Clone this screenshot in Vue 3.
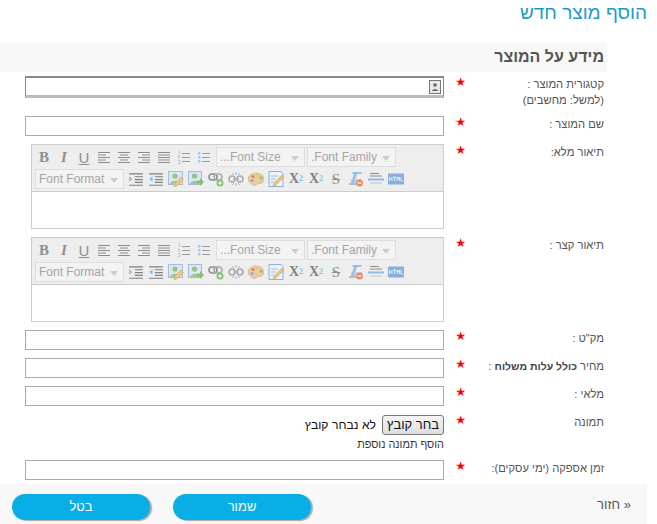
<script setup>
const row1 = ['align-l', 'align-c', 'align-r', 'align-j', 'ol', 'ul']
const row2 = ['indent', 'outdent', 'imgedit', 'imgins', 'link', 'unlink', 'palette', 'docedit']
const row3 = ['clear', 'hr', 'html']
const editors = ['תיאור מלא:', 'תיאור קצר :']
</script>

<template>
  <div class="page" dir="rtl">
    <svg class="defs" width="0" height="0" aria-hidden="true">
      <symbol id="align-l" viewBox="0 0 14 14"><path d="M1 2.500h12M1 5h8M1 7.500h12M1 10h8M1 12.500h12" stroke="#777" fill="none"/></symbol>
      <symbol id="align-c" viewBox="0 0 14 14"><path d="M1 2.500h12M3 5h8M1 7.500h12M3 10h8M1 12.500h12" stroke="#777" fill="none"/></symbol>
      <symbol id="align-r" viewBox="0 0 14 14"><path d="M1 2.500h12M5 5h8M1 7.500h12M5 10h8M1 12.500h12" stroke="#777" fill="none"/></symbol>
      <symbol id="align-j" viewBox="0 0 14 14"><path d="M1 2.500h12M1 5h12M1 7.500h12M1 10h12M1 12.500h12" stroke="#777" fill="none"/></symbol>
      <symbol id="ol" viewBox="0 0 14 14"><path d="M5 3.500h8M5 7.500h8M5 11.500h8" stroke="#888" fill="none"/><path d="M1.500 1h1v3M1 6h2l-2 2h2M1 10.500h2v3H1" stroke="#8fbde8" fill="none" stroke-width=".9"/></symbol>
      <symbol id="ul" viewBox="0 0 14 14"><path d="M5 3.500h8M5 7.500h8M5 11.500h8" stroke="#888" fill="none"/><rect x="1" y="2" width="2.400" height="2.400" fill="#8fbde8"/><rect x="1" y="6" width="2.400" height="2.400" fill="#8fbde8"/><rect x="1" y="10" width="2.400" height="2.400" fill="#8fbde8"/></symbol>
      <symbol id="indent" viewBox="0 0 14 14"><path d="M1 2.500h12M6 5h7M6 7.500h7M6 10h7M1 12.500h12" stroke="#666" fill="none"/><path d="M1 4.500l3 2.500-3 2.500z" fill="#6fb2ea"/></symbol>
      <symbol id="outdent" viewBox="0 0 14 14"><path d="M1 2.500h12M6 5h7M6 7.500h7M6 10h7M1 12.500h12" stroke="#666" fill="none"/><path d="M4 4.500L1 7l3 2.500z" fill="#6fb2ea"/></symbol>
      <symbol id="imgedit" viewBox="0 0 16 16"><rect x=".5" y=".5" width="14" height="13" fill="#d6e6f5" stroke="#8fb2d8"/><circle cx="7" cy="5" r="2.600" fill="#84b56f"/><path d="M2 13c1-4 8-4 9-1v1H2z" fill="#8cbf70"/><path d="M6 15.500l1-3.500 6-6 2.500 2.500-6 6z" fill="#ecc26c" stroke="#b98a3c" stroke-width=".6"/></symbol>
      <symbol id="imgins" viewBox="0 0 16 16"><rect x=".5" y=".5" width="13" height="13" fill="#d6e6f5" stroke="#8fb2d8"/><circle cx="6.500" cy="5" r="2.600" fill="#84b56f"/><path d="M2 13c1-4 8-4 9-1v1H2z" fill="#8cbf70"/><path d="M9 9.500h3V7l4 4-4 4v-2.500H9z" fill="#6ab556"/></symbol>
      <symbol id="link" viewBox="0 0 16 16"><rect x="1" y="3" width="8" height="6" rx="3" fill="none" stroke="#777" stroke-width="1.600"/><rect x="6" y="3" width="8" height="6" rx="3" fill="none" stroke="#999" stroke-width="1.600"/><circle cx="12" cy="12" r="3.500" fill="#6cb85a"/><path d="M12 10v4M10 12h4" stroke="#fff"/></symbol>
      <symbol id="unlink" viewBox="0 0 16 16"><rect x="1" y="5" width="6" height="6" rx="3" fill="none" stroke="#999" stroke-width="1.500"/><rect x="9" y="5" width="6" height="6" rx="3" fill="none" stroke="#999" stroke-width="1.500"/><path d="M5 8h6" stroke="#999"/><path d="M8 1v3M8 12v3M4 2l2 2M12 2l-2 2M4 14l2-2M12 14l-2-2" stroke="#7db2e6"/></symbol>
      <symbol id="palette" viewBox="0 0 16 16"><path d="M8 2c4.500 0 8 2.500 8 6s-3 5-5 4.500-3 2.500-5 2S0 11 0 8s3.500-6 8-6z" fill="#eac48e" stroke="#c49a5e" stroke-width=".6"/><circle cx="5" cy="5.500" r="1.500" fill="#d95d4a"/><circle cx="9" cy="4.500" r="1.500" fill="#e8c040"/><circle cx="13" cy="7" r="1.500" fill="#6cb85a"/><circle cx="4" cy="9.500" r="1.500" fill="#6a9fe0"/></symbol>
      <symbol id="docedit" viewBox="0 0 16 16"><path d="M1 .5h12l2 2v13H1z" fill="#eef5fc" stroke="#6fa3d6"/><path d="M3 5h7M3 8h5M3 11h3" stroke="#8ab4dc"/><path d="M5 15l1-3 8-8 2 2-8 8z" fill="#e8c060" stroke="#b98a3c" stroke-width=".6"/></symbol>
      <symbol id="clear" viewBox="0 0 16 16"><path d="M5 1h9l-1 2H9l-3 9h2v2H1v-2h2l3-9H4z" fill="#85b5e5"/><path d="M3 9h11M3 11h11" stroke="#85b5e5"/><circle cx="11.500" cy="12" r="3.500" fill="#e8734a"/><path d="M9.500 12h4" stroke="#fff" stroke-width="1.200"/></symbol>
      <symbol id="hr" viewBox="0 0 16 16"><path d="M2 2.500h9M2 5h12" stroke="#777" fill="none"/><path d="M0 8.500h16" stroke="#7db2e6" stroke-width="2"/><path d="M2 12h12" stroke="#bbb"/></symbol>
      <symbol id="html" viewBox="0 0 16 14"><rect width="16" height="11" y="1.500" fill="#6f9fdc"/><path d="M1.500 5v4M4 5v4M1.500 7H4M5 5h3M6.500 5v4M9 9V5l1.200 2L11.500 5v4M13 5v4h2.500" stroke="#fff" stroke-width=".8" fill="none"/></symbol>
    </svg>

    <h1 class="title">הוסף מוצר חדש</h1>

    <div class="section">
      <h2 class="section-head">מידע על המוצר</h2>

      <div class="row row-cat">
        <label class="lbl">קטגורית המוצר :<br>(למשל: מחשבים)</label>
        <span class="star">★</span>
        <div class="cat-box">
          <svg class="cat-ic" width="12" height="14" viewBox="0 0 12 14"><rect x=".5" y=".5" width="11" height="13" fill="#e8e8e8" stroke="#777"/><circle cx="6" cy="5" r="1.800" fill="#666"/><path d="M3 11c0-2.500 6-2.500 6 0z" fill="#666"/></svg>
        </div>
      </div>

      <div class="row">
        <label class="lbl">שם המוצר :</label>
        <span class="star">★</span>
        <div class="box"></div>
      </div>

      <div v-for="ed in editors" :key="ed" class="row">
        <label class="lbl">{{ ed }}</label>
        <span class="star">★</span>
        <div class="editor-wrap">
          <div class="editor" dir="ltr">
            <div class="toolbar">
              <div class="tline">
                <span class="tb txt b">B</span>
                <span class="tb txt i">I</span>
                <span class="tb txt u">U</span>
                <span v-for="k in row1" :key="k" class="tb"><svg width="14" height="14"><use :href="'#' + k" /></svg></span>
                <span class="sel sel-size">...Font Size<i class="caret"></i></span>
                <span class="sel">.Font Family<i class="caret"></i></span>
              </div>
              <div class="tline line2">
                <span class="sel sel-format">Font Format<i class="caret"></i></span>
                <span class="icons">
                  <span v-for="k in row2" :key="k" class="tb"><svg width="16" height="16"><use :href="'#' + k" /></svg></span>
                  <span class="tb txt b x">X<sub>2</sub></span>
                  <span class="tb txt b x">X<sup>2</sup></span>
                  <span class="tb txt b s">S</span>
                  <span v-for="k in row3" :key="k" class="tb"><svg width="16" height="16"><use :href="'#' + k" /></svg></span>
                </span>
              </div>
            </div>
            <div class="edit-area"></div>
          </div>
        </div>
      </div>

      <div class="row">
        <label class="lbl">מק"ט :</label>
        <span class="star">★</span>
        <div class="box"></div>
      </div>
      <div class="row">
        <label class="lbl">מחיר <b>כולל עלות משלוח</b> :</label>
        <span class="star">★</span>
        <div class="box"></div>
      </div>
      <div class="row">
        <label class="lbl">מלאי :</label>
        <span class="star">★</span>
        <div class="box"></div>
      </div>
      <div class="row row-img">
        <label class="lbl">תמונה</label>
        <span class="star">★</span>
        <div class="img-field">
          <div class="file-line">
            <span class="file-btn">בחר קובץ</span>
            <span class="file-none">לא נבחר קובץ</span>
          </div>
          <div class="more">הוסף תמונה נוספת</div>
        </div>
      </div>
      <div class="row">
        <label class="lbl">זמן אספקה (ימי עסקים):</label>
        <span class="star">★</span>
        <div class="box"></div>
      </div>
    </div>

    <div class="footer">
      <span class="back">« חזור</span>
      <span class="btns">
        <span class="btn">שמור</span>
        <span class="btn">בטל</span>
      </span>
    </div>
  </div>
</template>

<style>
html, body { margin: 0; background: #fff; }
</style>

<style scoped>
.page {
  width: 657px;
  height: 524px;
  overflow: hidden;
  position: relative;
  font-family: "Liberation Sans", Arial, sans-serif;
  font-size: 11.200px;
  color: #555;
  background: #fff;
}
.defs { position: absolute; }
.title {
  margin: 0;
  padding: 1px 10px 0 0;
  height: 41px;
  font-size: 19px;
  line-height: 24px;
  font-weight: normal;
  color: #1c9bc8;
}
.section { width: 607px; margin-right: 50px; }
.section-head {
  margin: 0 0 4px;
  height: 30px;
  padding-right: 3px;
  background: #f8f8f8;
  font-size: 16px;
  line-height: 30px;
  color: #555;
}
.row {
  display: grid;
  grid-template-columns: 138px 22px 419px;
  margin: 0 3px 8px 0;
}
.row-cat { height: 32px; }
.lbl { line-height: 16px; }
.lbl b { color: #444; font-size: 10.500px; }
.star { color: #f00; font-size: 12px; line-height: 12px; font-family: "DejaVu Sans", sans-serif; }
.box {
  height: 18px;
  border: 1px solid #aaa;
  background: #fff;
}
.cat-box {
  height: 17px;
  border: 1px solid #888;
  border-top-width: 2px;
  border-bottom: 3px solid #bbb;
  background: #fff;
  display: flex;
  align-items: center;
  padding-right: 2px;
}
.cat-ic { display: block; }
.editor-wrap { display: flex; }
.editor {
  width: 411px;
  height: 83px;
  border: 1px solid #ccc;
  background: #fff;
  display: flex;
  flex-direction: column;
}
.toolbar {
  height: 47px;
  box-sizing: border-box;
  background: #eee;
  border-bottom: 1px solid #ccc;
  padding: 2px 0 0 2px;
}
.tline { display: flex; align-items: center; height: 20px; }
.line2 { margin-top: 2px; }
.tb {
  width: 20px;
  height: 20px;
  display: flex;
  align-items: center;
  justify-content: center;
  flex: none;
  opacity: .8;
}
.txt { font-family: "Liberation Serif", serif; color: #777; font-size: 15px; }
.b { font-weight: bold; }
.i { font-style: italic; font-weight: bold; }
.u { text-decoration: underline; font-family: "Liberation Sans", sans-serif; font-weight: normal; }
.s { text-decoration: line-through; font-weight: normal; }
.x { font-size: 14px; color: #666; }
.x sub, .x sup { font-size: 8px; color: #7ab0e0; line-height: 0; }
.icons { display: flex; margin-left: 2px; }
.sel {
  width: 89px;
  height: 20px;
  box-sizing: border-box;
  border: 1px solid #ddd;
  background: #f3f3f3;
  color: #a5a5a5;
  font-size: 12px;
  line-height: 18px;
  padding-left: 3px;
  flex: none;
  position: relative;
  font-family: "Liberation Sans", sans-serif;
}
.sel + .sel { margin-left: 2px; }
.tline .sel-size { margin-left: 2px; }
.tline .sel-format { margin-left: 1px; }
.caret {
  position: absolute;
  right: 5px;
  top: 8px;
  border: 4px solid transparent;
  border-top: 5px solid #ccc;
  border-bottom: 0;
}
.edit-area { flex: 1; }
.img-field { color: #333; }
.row-img { margin-bottom: 9px; }
.file-line { display: flex; align-items: center; gap: 6px; height: 21px; }
.file-btn {
  width: 62px;
  height: 20px;
  box-sizing: border-box;
  border: 1px solid #777;
  border-radius: 3px;
  background: linear-gradient(#f6f6f6, #ddd);
  font-size: 13px;
  line-height: 18px;
  text-align: center;
  color: #111;
}
.file-none { font-size: 12.200px; color: #111; }
.more { font-size: 10.900px; line-height: 14px; margin-top: 2px; color: #333; }
.footer {
  position: absolute;
  right: 10px;
  left: 0;
  bottom: 0;
  height: 40px;
  background: #f8f8f8;
  display: flex;
  align-items: center;
  justify-content: space-between;
  padding: 0 16px 0 12px;
  font-size: 13px;
}
.btns { display: flex; gap: 23px; padding-top: 6px; }
.btn {
  width: 138px;
  height: 26px;
  border-radius: 13px;
  background: #0aaee6;
  box-shadow: 2px 1px 1px #aaa;
  color: #fff;
  text-align: center;
  line-height: 26px;
  font-size: 13px;
}
</style>
